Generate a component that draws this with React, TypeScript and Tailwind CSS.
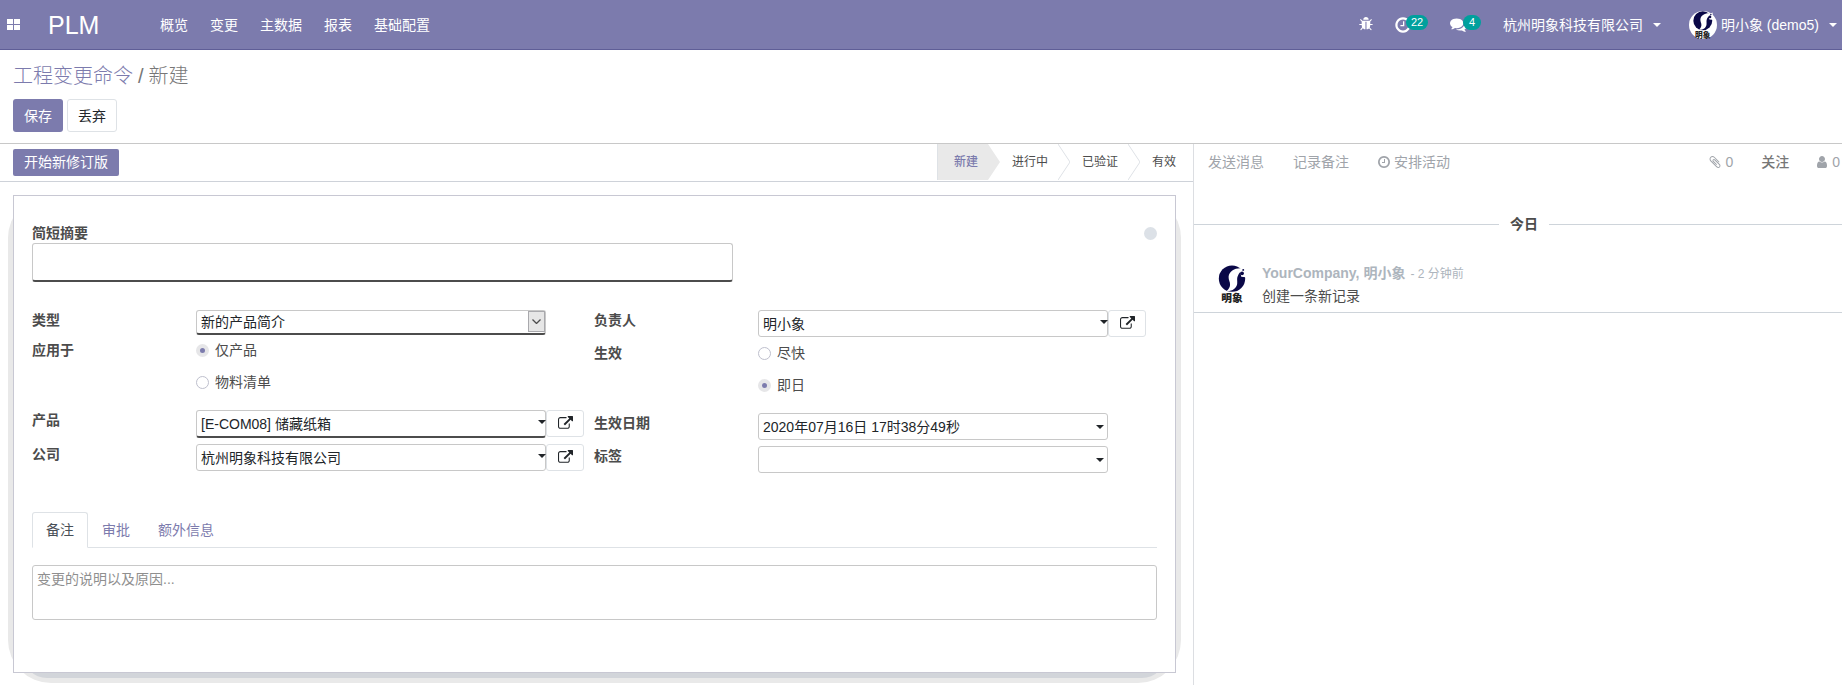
import { useState } from 'react'
import type { ReactNode } from 'react'

const icons = {
  bug: 'M1632 896q0 26-19 45t-45 19h-224q0 171-67 290l208 209q19 19 19 45t-19 45q-18 19-45 19t-45-19l-198-197q-5 5-15 13t-42 28.5-65 36.5-82 29-97 13v-896h-128v896q-51 0-101.5-13.5t-87-33-66-39-43.5-32.5l-15-14-183 207q-20 21-48 21-24 0-43-16-19-18-20.5-44.5t15.5-46.5l202-227q-58-114-58-274h-224q-26 0-45-19t-19-45 19-45 45-19h224v-294l-173-173q-19-19-19-45t19-45 45-19 45 19l173 173h844l173-173q19-19 45-19t45 19 19 45-19 45l-173 173v294h224q26 0 45 19t19 45zm-480-576h-640q0-133 93.5-226.5t226.5-93.5 226.5 93.5 93.5 226.5z',
  clock: 'M1024 544v448q0 14-9 23t-23 9h-320q-14 0-23-9t-9-23v-64q0-14 9-23t23-9h224v-352q0-14 9-23t23-9h64q14 0 23 9t9 23zm416 352q0-148-73-273t-198-198-273-73-273 73-198 198-73 273 73 273 198 198 273 73 273-73 198-198 73-273zm224 0q0 209-103 385.5t-279.5 279.5-385.5 103-385.5-103-279.5-279.5-103-385.5 103-385.5 279.5-279.5 385.5-103 385.5 103 279.5 279.5 103 385.5z',
  comments: 'M1408 768q0 139-94 257t-256.5 186.5-353.5 68.5q-86 0-176-16-124 88-278 128-36 9-86 16h-3q-11 0-20.5-8t-11.5-21q-1-3-1-6.5t.5-6.5 2-6l2.5-5 3.5-5.5 4-5 4.5-5 4-4.5q5-6 23-25t26-29.5 22.5-29 25-38.5 20.5-44q-124-72-195-177t-71-224q0-139 94-257t256.5-186.5 353.5-68.5 353.5 68.5 256.5 186.5 94 257zm384 256q0 120-71 224.5t-195 176.5q10 24 20.5 44t25 38.5 22.5 29 26 29.5 23 25q1 1 4 4.5t4.5 5 4 5 3.5 5.5l2.5 5 2 6 .5 6.5-1 6.5q-3 14-13 22t-22 7q-50-7-86-16-154-40-278-128-90 16-176 16-271 0-472-132 58 4 88 4 161 0 309-45t264-129q125-92 192-212t67-254q0-77-23-152 129 71 204 178t75 230z',
  external: 'M1408 928v320q0 119-84.5 203.5t-203.5 84.5h-832q-119 0-203.5-84.5t-84.5-203.5v-832q0-119 84.5-203.5t203.5-84.5h704q14 0 23 9t9 23v64q0 14-9 23t-23 9h-704q-66 0-113 47t-47 113v832q0 66 47 113t113 47h832q66 0 113-47t47-113v-320q0-14 9-23t23-9h64q14 0 23 9t9 23zm384-864v512q0 26-19 45t-45 19-45-19l-176-176-652 652q-10 10-23 10t-23-10l-114-114q-10-10-10-23t10-23l652-652-176-176q-19-19-19-45t19-45 45-19h512q26 0 45 19t19 45z',
  user: 'M1536 1399q0 109-62.5 187t-150.5 78h-854q-88 0-150.5-78t-62.5-187q0-85 8.5-160.5t31.5-152 58.5-131 94-89 134.5-34.5q131 128 313 128t313-128q76 0 134.5 34.5t94 89 58.5 131 31.5 152 8.5 160.5zm-256-887q0 159-112.5 271.5t-271.5 112.5-271.5-112.5-112.5-271.5 112.5-271.5 271.5-112.5 271.5 112.5 112.5 271.5z',
  paperclip: 'M1596 1385q0 117-79 196t-196 79q-135 0-235-100l-777-776q-113-115-113-271 0-159 110-270t269-111q158 0 273 113l605 606q10 10 10 22 0 16-30.5 46.5t-46.5 30.5q-13 0-23-10l-606-607q-79-77-181-77-106 0-179 75t-73 181q0 105 76 181l776 777q63 63 145 63 64 0 106-42t42-106q0-82-63-145l-581-581q-26-24-60-24-29 0-48 19t-19 48q0 32 25 59l410 410q10 10 10 22 0 16-31 47t-47 31q-12 0-22-10l-410-410q-63-61-63-149 0-82 57-139t139-57q88 0 149 63l581 581q100 98 100 235z',
}

function Icon({ name, className }: { name: keyof typeof icons; className: string }) {
  return (
    <svg viewBox="0 0 1792 1792" className={`shrink-0 fill-current ${className}`} aria-hidden="true">
      <path d={icons[name]} />
    </svg>
  )
}

function Caret({ className = '' }: { className?: string }) {
  return (
    <svg viewBox="0 0 8 4" className={`h-1 w-2 shrink-0 fill-current ${className}`} aria-hidden="true">
      <path d="M0 0h8L4 4z" />
    </svg>
  )
}

function Logo({ className }: { className: string }) {
  return (
    <svg viewBox="0 0 28 40" className={`overflow-visible ${className}`} role="img" aria-label="明象">
      <circle cx="14" cy="14" r="13.5" fill="#0a0847" />
      <path d="M24.500 3.500C18 2.500 11 6 10.500 12c-.2 3.500 1.800 5 1.500 8.500-.2 2.500-1.500 4.500-3.500 6.200 6 .3 10-2.700 10.800-7.200.5-3.500-.8-5.500 1-9C21.200 8.500 22.500 7 25 6z" fill="#fff" />
      <path d="M22 5l6-3v10.500l-4.500-.5z" fill="#fff" />
      <circle cx="24.300" cy="8.500" r="1.900" fill="#0a0847" />
      <circle cx="25.500" cy="5" r="1" fill="#0a0847" />
      <text x="14" y="38" textAnchor="middle" fontSize="11" fontWeight="900" fill="#222" fontFamily="'Noto Sans CJK SC', sans-serif">
        明象
      </text>
    </svg>
  )
}

const menus = ['概览', '变更', '主数据', '报表', '基础配置']

function Navbar() {
  return (
    <header className="flex h-[50px] items-center border-b border-[#5f5e97] bg-[#7c7bad] text-white">
      <button aria-label="应用" className="ml-[7px] grid grid-cols-2 gap-px">
        <span className="h-[5px] w-1.5 bg-white" />
        <span className="h-[5px] w-1.5 bg-white" />
        <span className="h-[5px] w-1.5 bg-white" />
        <span className="h-[5px] w-1.5 bg-white" />
      </button>
      <a href="#" className="ml-7 w-28 text-[25px] leading-8">PLM</a>
      <nav className="flex gap-[22px]">
        {menus.map((m) => (
          <a key={m} href="#">{m}</a>
        ))}
      </nav>
      <div className="ml-auto flex items-center pr-[5px]">
        <button aria-label="调试" className="mr-5">
          <Icon name="bug" className="size-[15px]" />
        </button>
        <button aria-label="活动" className="relative mr-[38px]">
          <Icon name="clock" className="size-[18px]" />
          <span className="absolute -top-px left-3 rounded-full bg-[#00a09d] px-[5px] text-[11px] leading-[15px]">22</span>
        </button>
        <button aria-label="会话" className="relative mr-9">
          <Icon name="comments" className="size-[17px]" />
          <span className="absolute -top-px left-[13px] rounded-full bg-[#00a09d] px-1.5 text-[11px] leading-[15px]">4</span>
        </button>
        <button className="mr-7 flex items-center gap-2.5">
          杭州明象科技有限公司
          <Caret />
        </button>
        <button className="flex items-center">
          <span className="mr-1 flex size-7 justify-center rounded-full bg-white">
            <Logo className="h-7" />
          </span>
          明小象 (demo5)
          <Caret className="ml-2.5" />
        </button>
      </div>
    </header>
  )
}

function ControlPanel() {
  return (
    <div className="border-b border-[#c8c8c8] px-[13px] pt-3 pb-[11px]">
      <ol className="flex text-xl leading-7 font-light text-[#777]">
        <li><a href="#" className="text-[#7c7bad]">工程变更命令</a></li>
        <li className="before:px-[5px] before:content-['/']">新建</li>
      </ol>
      <div className="mt-[9px] flex gap-1">
        <button className="h-[33px] rounded-[3px] bg-[#7c7bad] px-[11px] text-white">保存</button>
        <button className="h-[33px] rounded-[3px] border border-[#dee2e6] px-2.5 text-[#212529]">丢弃</button>
      </div>
    </div>
  )
}

function StageArrow({ active }: { active?: boolean }) {
  return (
    <svg viewBox="0 0 12 36" preserveAspectRatio="none" className="absolute top-0 left-full h-full w-3" aria-hidden="true">
      <path d="M0 0L12 18L0 36" fill={active ? '#e9e9e9' : '#fff'} stroke={active ? 'none' : '#dee2e6'} />
    </svg>
  )
}

function StatusBar() {
  return (
    <div className="flex h-[38px] items-center justify-between border-b border-[#ced2d9] pl-[13px]">
      <button className="h-[27px] rounded-[2px] bg-[#7c7bad] px-[11px] leading-[25px] text-white">开始新修订版</button>
      <div className="flex h-9 self-start text-xs leading-9 text-[#4c4c4c]">
        <button className="relative border-l border-[#dee2e6] bg-[#e9e9e9] pr-2.5 pl-4 font-medium text-[#7c7bad]">
          新建
          <StageArrow active />
        </button>
        <button className="relative pr-2.5 pl-6">
          进行中
          <StageArrow />
        </button>
        <button className="relative pr-2.5 pl-6">
          已验证
          <StageArrow />
        </button>
        <button className="pr-[17px] pl-6">有效</button>
      </div>
    </div>
  )
}

function Row({ label, id, children }: { label: string; id: string; children: ReactNode }) {
  return (
    <div className="flex items-start">
      <label htmlFor={id} className="w-[164px] shrink-0 leading-5 font-bold">{label}</label>
      <div className="min-w-0 flex-1">{children}</div>
    </div>
  )
}

type FieldProps = { id: string; value: string; required?: boolean; link?: boolean }

function Field({ id, value, required, link }: FieldProps) {
  return (
    <div className="flex text-[#212529]">
      <div className="relative flex-1">
        <input
          id={id}
          defaultValue={value}
          className={`block w-full rounded-[3px] border border-[#c8c8c8] px-1 pb-0.5 outline-none ${required ? 'h-7 border-b-2 border-b-[#4c4c4c]' : 'h-[27px]'}`}
        />
        <Caret className={`absolute ${link ? 'top-2.5 right-0' : 'top-3 right-1'}`} />
      </div>
      {link ? (
        <button aria-label="外部链接" className="flex h-[27px] w-[38px] items-center justify-center rounded-[3px] border border-[#dee2e6]">
          <Icon name="external" className="size-[15px]" />
        </button>
      ) : (
        <span className="w-[38px]" />
      )}
    </div>
  )
}

function Radios({ id, options, initial }: { id: string; options: string[]; initial: number }) {
  const [picked, setPicked] = useState(initial)

  return (
    <div className="flex flex-col gap-3 leading-5">
      {options.map((o, i) => (
        <label key={o} className="flex items-center gap-1.5">
          <input
            type="radio"
            id={i === 0 ? id : undefined}
            name={id}
            checked={picked === i}
            onChange={() => setPicked(i)}
            className="size-[13px] appearance-none rounded-full border border-[#bebfcd] checked:border-4 checked:border-[#e6e6e8] checked:bg-[#7c7bad]"
          />
          {o}
        </label>
      ))}
    </div>
  )
}

function Sheet() {
  return (
    <div className="relative isolate mt-[13px] mr-[17px] ml-[13px]">
      {/* Layered sheet shadow */}
      <div className="absolute top-0 -right-[5px] -bottom-2.5 -left-[5px] -z-10 rounded-[43px] bg-[#e9e9e9]" />
      <div className="absolute top-8 right-2.5 -bottom-[5px] left-2.5 -z-10 rounded-[24px] bg-[#d2d5da]" />

      <div className="border border-[#c8c8d3] bg-white px-[18px] pt-[27px] pb-[52px]">
        <div className="flex items-center justify-between">
          <label htmlFor="summary" className="leading-5 font-bold">简短摘要</label>
          <button aria-label="看板状态" className="size-[13px] rounded-full bg-[#dce1e7]" />
        </div>
        <input id="summary" className="block h-[39px] w-[62.3%] rounded-[3px] border border-b-2 border-[#c8c8c8] border-b-[#4c4c4c] px-[5px] outline-none" />

        <div className="mt-7 grid grid-cols-[562fr_563fr]">
          <div className="pr-2.5">
            <Row label="类型" id="type">
              <div className="relative mr-[38px] text-[#212529]">
                <select id="type" className="block h-[25px] w-full appearance-none rounded-[3px] border border-b-2 border-[#c8c8c8] border-b-[#4c4c4c] px-1 leading-5 outline-none">
                  <option>新的产品简介</option>
                </select>
                <span className="pointer-events-none absolute top-px right-px flex h-[21px] w-[17px] items-center justify-center border border-[#a9a9ad] bg-[#e6e6e6]">
                  <svg viewBox="0 0 9 5" className="h-[5px] w-[9px]" aria-hidden="true">
                    <path d="M.5.5l4 4 4-4" fill="none" stroke="#4c4c4c" strokeWidth="1.3" />
                  </svg>
                </span>
              </div>
            </Row>
            <div className="mt-[5px]">
              <Row label="应用于" id="apply">
                <Radios id="apply" options={['仅产品', '物料清单']} initial={0} />
              </Row>
            </div>
            <div className="mt-[18px] flex flex-col gap-1.5">
              <Row label="产品" id="product">
                <Field id="product" value="[E-COM08] 储藏纸箱" required link />
              </Row>
              <Row label="公司" id="company">
                <Field id="company" value="杭州明象科技有限公司" link />
              </Row>
            </div>
          </div>
          <div className="pr-[11px]">
            <Row label="负责人" id="responsible">
              <Field id="responsible" value="明小象" link />
            </Row>
            <div className="mt-1.5">
              <Row label="生效" id="effective">
                <Radios id="effective" options={['尽快', '即日']} initial={1} />
              </Row>
            </div>
            <div className="mt-[18px] flex flex-col gap-1.5">
              <Row label="生效日期" id="date">
                <Field id="date" value="2020年07月16日 17时38分49秒" />
              </Row>
              <Row label="标签" id="tags">
                <Field id="tags" value="" />
              </Row>
            </div>
          </div>
        </div>

        <div role="tablist" className="mt-[39px] flex border-b border-[#dee2e6]">
          <button role="tab" aria-selected="true" className="-mb-px h-9 rounded-t-[3px] border border-[#dee2e6] border-b-white bg-white px-[13px] text-[#495057]">备注</button>
          <button role="tab" className="px-3.5 text-[#7c7bad]">审批</button>
          <button role="tab" className="px-3.5 text-[#7c7bad]">额外信息</button>
        </div>
        <textarea
          aria-label="备注"
          placeholder="变更的说明以及原因..."
          className="mt-[17px] block h-[55px] w-full resize-none rounded-[3px] border border-[#c8c8c8] px-1 py-[3px] leading-5 outline-none placeholder:text-[#8f8f8f]"
        />
      </div>
    </div>
  )
}

function Chatter() {
  return (
    <aside className="min-w-0 overflow-hidden border-l border-[#dcdee2]">
      <div className="flex h-9 items-center pr-0.5 pl-3.5 text-[#a0a4aa]">
        <button className="mr-[29px]">发送消息</button>
        <button className="mr-7">记录备注</button>
        <button className="flex items-center gap-[3px]">
          <Icon name="clock" className="size-3.5" />
          安排活动
        </button>
        <button className="mr-7 ml-auto flex items-center gap-[3px]">
          <Icon name="paperclip" className="size-3.5" />
          0
        </button>
        <button className="mr-[26px] font-medium text-[#777]">关注</button>
        <button className="flex items-center gap-[3px]">
          <Icon name="user" className="size-3.5" />
          0
        </button>
      </div>

      <div className="mt-[34px] -mr-3 flex items-center gap-[11px] leading-5 font-bold before:h-px before:flex-1 before:bg-[#ced4da] after:h-px after:flex-1 after:bg-[#ced4da]">
        今日
      </div>

      <div className="mt-7 flex border-b border-[#ced4da] pb-1 pl-6">
        <Logo className="mt-[3px] h-[39px] w-7" />
        <div className="ml-4 leading-[23px]">
          <p className="text-[#adb5bd]">
            <strong>YourCompany, 明小象</strong>
            <span className="ml-[5px] text-xs leading-5">- 2 分钟前</span>
          </p>
          <p>创建一条新记录</p>
        </div>
      </div>
    </aside>
  )
}

export default function App() {
  return (
    <div className="flex min-h-screen flex-col bg-white font-['Liberation_Sans','Noto_Sans_CJK_SC',sans-serif] text-sm text-[#4c4c4c]">
      <Navbar />
      <ControlPanel />
      <main className="grid flex-1 grid-cols-[1193fr_649fr]">
        <section className="min-w-0">
          <StatusBar />
          <Sheet />
        </section>
        <Chatter />
      </main>
    </div>
  )
}
